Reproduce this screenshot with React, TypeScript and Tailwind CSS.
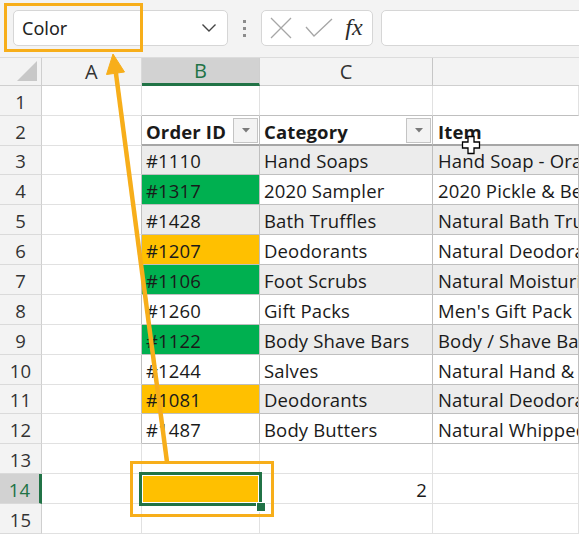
import React from "react";

type Row = {
  n: number;
  b?: string;
  c?: string;
  d?: string;
  bCls?: string;
  band?: boolean;
  h: string;
};

const rows: Row[] = [
  { n: 3, b: "#1110", c: "Hand Soaps", d: "Hand Soap - Orange", bCls: "bg-[#ececec]", band: true, h: "h-[29px]" },
  { n: 4, b: "#1317", c: "2020 Sampler", d: "2020 Pickle & Beer", bCls: "bg-[#00b050]", h: "h-[30px]" },
  { n: 5, b: "#1428", c: "Bath Truffles", d: "Natural Bath Truffles", bCls: "bg-[#ececec]", band: true, h: "h-[30px]" },
  { n: 6, b: "#1207", c: "Deodorants", d: "Natural Deodorant", bCls: "bg-[#ffc000]", h: "h-[30px]" },
  { n: 7, b: "#1106", c: "Foot Scrubs", d: "Natural Moisturizing Foot Scrub", bCls: "bg-[#00b050]", band: true, h: "h-[30px]" },
  { n: 8, b: "#1260", c: "Gift Packs", d: "Men's Gift Pack", bCls: "bg-white", h: "h-[30px]" },
  { n: 9, b: "#1122", c: "Body Shave Bars", d: "Body / Shave Bar", bCls: "bg-[#00b050]", band: true, h: "h-[30px]" },
  { n: 10, b: "#1244", c: "Salves", d: "Natural Hand & Body Salve", bCls: "bg-white", h: "h-[30px]" },
  { n: 11, b: "#1081", c: "Deodorants", d: "Natural Deodorant", bCls: "bg-[#ffc000]", band: true, h: "h-[29px]" },
  { n: 12, b: "#1487", c: "Body Butters", d: "Natural Whipped Body Butter", bCls: "bg-white", h: "h-[30px]" },
];

const base =
  "shrink-0 h-full box-border border-r border-b flex items-center overflow-hidden whitespace-nowrap pt-[2px]";

function RowHead({ n, active }: { n: number; active?: boolean }) {
  return (
    <div
      className={
        active
          ? "shrink-0 w-[42px] h-full box-border border-b border-b-[#dadada] border-r-[3px] border-r-[#217346] bg-[#d2d2d2] text-[#217346] flex items-center justify-center text-[18.5px] pt-[2px]"
          : "shrink-0 w-[42px] h-full box-border border-b border-b-[#dadada] border-r border-r-[#cfcfcf] bg-[#f3f3f3] text-[#333] flex items-center justify-center text-[18.5px] pt-[2px]"
      }
    >
      {n}
    </div>
  );
}

function FilterBtn() {
  return (
    <div className="shrink-0 w-[25px] h-[25px] mr-[1px] box-border border border-[#c4c4c4] bg-[#f3f3f3] flex items-center justify-center">
      <svg width="8" height="5" viewBox="0 0 8 5">
        <path d="M0 0 L8 0 L4 4.5 Z" fill="#7a7a7a" />
      </svg>
    </div>
  );
}

function Cursor() {
  return (
    <svg width="20" height="20" viewBox="0 0 20 20">
      <path
        d="M7 1.5 H13 V7 H18.5 V13 H13 V18.5 H7 V13 H1.5 V7 H7 Z"
        fill="white"
        stroke="black"
        strokeWidth="1.3"
      />
    </svg>
  );
}

export default function App() {
  return (
    <div className="relative w-[579px] h-[534px] overflow-hidden bg-white font-['Open_Sans',sans-serif] text-[#1a1a1a] tracking-[0.15px]">
      {/* Toolbar */}
      <div className="h-[57px] bg-[#f3f3f3] flex items-start pt-[10px] pl-[13px]">
        <div className="w-[215px] h-[36px] box-border rounded-[5px] border border-[#d6d6d6] bg-white flex items-center pl-[8px] pr-[8px]">
          <span className="flex-1 text-[18px] text-[#222] font-['Noto_Sans',sans-serif] tracking-normal">Color</span>
          <svg width="16" height="10" viewBox="0 0 16 10" className="mr-[2px]">
            <path d="M1.5 1.5 L8 8 L14.5 1.5" fill="none" stroke="#444" strokeWidth="1.4" />
          </svg>
        </div>
        <div className="w-[33px] h-[36px] flex flex-col items-center justify-center gap-[4px]">
          <div className="w-[3px] h-[3px] bg-[#8c8c8c]" />
          <div className="w-[3px] h-[3px] bg-[#8c8c8c]" />
          <div className="w-[3px] h-[3px] bg-[#8c8c8c]" />
        </div>
        <div className="w-[112px] h-[36px] box-border rounded-[5px] border border-[#d6d6d6] bg-white flex items-center">
          <div className="w-[38px] flex justify-center">
            <svg width="22" height="22" viewBox="0 0 22 22">
              <path d="M1 1 L21 21 M21 1 L1 21" stroke="#a6a6a6" strokeWidth="1.3" />
            </svg>
          </div>
          <div className="w-[38px] flex justify-center">
            <svg width="28" height="20" viewBox="0 0 28 20">
              <path d="M1 9 L9 18 L27 1" fill="none" stroke="#a6a6a6" strokeWidth="1.3" />
            </svg>
          </div>
          <div className="w-[32px] flex justify-center text-[24px] italic text-[#2a2a2a] font-['Liberation_Serif',serif] leading-none pb-[2px] tracking-normal">
            fx
          </div>
        </div>
        <div className="flex-1 ml-[8px] -mr-[10px] h-[36px] box-border rounded-[5px] border border-[#d6d6d6] bg-white" />
      </div>

      {/* Column headers */}
      <div className="flex h-[29px] box-border border-t border-t-[#dcdcdc]">
        <div className="shrink-0 w-[42px] h-full box-border border-r border-b border-[#cfcfcf] bg-[#f3f3f3] flex items-end justify-end pr-[4px] pb-[4px]">
          <svg width="20" height="20" viewBox="0 0 20 20">
            <path d="M20 0 L20 20 L0 20 Z" fill="#c8c8c8" />
          </svg>
        </div>
        <div className="shrink-0 w-[100px] h-full box-border border-r border-b border-r-[#dadada] border-b-[#cfcfcf] bg-[#f3f3f3] flex items-center justify-center text-[20px] text-[#333]">
          A
        </div>
        <div className="shrink-0 w-[118px] h-full box-border border-r border-r-[#cfcfcf] border-b-[3px] border-b-[#217346] bg-[#d2d2d2] flex items-center justify-center text-[20px] text-[#217346]">
          B
        </div>
        <div className="shrink-0 w-[173px] h-full box-border border-r border-b border-r-[#c6c6c6] border-b-[#cfcfcf] bg-[#f3f3f3] flex items-center justify-center text-[20px] text-[#333]">
          C
        </div>
        <div className="flex-1 h-full box-border border-b border-b-[#cfcfcf] bg-[#f3f3f3]" />
      </div>

      {/* Row 1 */}
      <div className="flex h-[30px] text-[18.5px]">
        <RowHead n={1} />
        <div className={`${base} w-[100px] border-[#e1e1e1]`} />
        <div className={`${base} w-[118px] border-r-[#e1e1e1] border-b-[#bfbfbf]`} />
        <div className={`${base} w-[173px] border-r-[#e1e1e1] border-b-[#bfbfbf]`} />
        <div className={`${base} flex-1 border-r-[#e1e1e1] border-b-[#bfbfbf]`} />
      </div>

      {/* Row 2: table header */}
      <div className="flex h-[30px] text-[18.5px]">
        <RowHead n={2} />
        <div className={`${base} w-[100px] border-r-[#bfbfbf] border-b-[#e1e1e1]`} />
        <div className="shrink-0 w-[118px] h-full box-border border-r border-r-[#bfbfbf] border-b-2 border-b-[#a6a6a6] bg-white flex items-center justify-between pl-[4px] font-bold whitespace-nowrap overflow-hidden">
          <span className="pt-[3px]">Order ID</span>
          <FilterBtn />
        </div>
        <div className="shrink-0 w-[173px] h-full box-border border-r border-r-[#bfbfbf] border-b-2 border-b-[#a6a6a6] bg-white flex items-center justify-between pl-[4px] font-bold whitespace-nowrap overflow-hidden">
          <span className="pt-[3px]">Category</span>
          <FilterBtn />
        </div>
        <div className="flex-1 h-full box-border border-b-2 border-b-[#a6a6a6] bg-white flex items-center pl-[5px] pt-[3px] font-bold whitespace-nowrap overflow-hidden">
          Item
        </div>
      </div>

      {/* Rows 3-12 */}
      {rows.map((r) => (
        <div key={r.n} className={`flex ${r.h} text-[18.5px]`}>
          <RowHead n={r.n} />
          <div className={`${base} w-[100px] border-r-[#bfbfbf] border-b-[#e1e1e1]`} />
          <div className={`${base} w-[118px] border-[#bfbfbf] pl-[4px] ${r.bCls}`}>{r.b}</div>
          <div
            className={`${base} w-[173px] border-[#bfbfbf] pl-[4px] ${r.band ? "bg-[#ececec]" : "bg-white"}`}
          >
            {r.c}
          </div>
          <div
            className={`${base} flex-1 border-[#bfbfbf] pl-[5px] ${r.band ? "bg-[#ececec]" : "bg-white"}`}
          >
            {r.d}
          </div>
        </div>
      ))}

      {/* Row 13 */}
      <div className="flex h-[30px] text-[18.5px]">
        <RowHead n={13} />
        <div className={`${base} w-[100px] border-[#e1e1e1]`} />
        <div className={`${base} w-[118px] border-[#e1e1e1]`} />
        <div className={`${base} w-[173px] border-[#e1e1e1]`} />
        <div className={`${base} flex-1 border-[#e1e1e1]`} />
      </div>

      {/* Row 14 */}
      <div className="flex h-[30px] text-[18.5px]">
        <RowHead n={14} active />
        <div className={`${base} w-[100px] border-[#e1e1e1]`} />
        <div className={`${base} w-[118px] border-[#e1e1e1] bg-[#ffc000]`} />
        <div className={`${base} w-[173px] border-[#e1e1e1] justify-end pr-[5px]`}>2</div>
        <div className={`${base} flex-1 border-[#e1e1e1]`} />
      </div>

      {/* Row 15 */}
      <div className="flex h-[30px] text-[18.5px]">
        <RowHead n={15} />
        <div className={`${base} w-[100px] border-[#e1e1e1]`} />
        <div className={`${base} w-[118px] border-[#e1e1e1]`} />
        <div className={`${base} w-[173px] border-[#e1e1e1]`} />
        <div className={`${base} flex-1 border-[#e1e1e1]`} />
      </div>

      {/* Selection on B14 */}
      <div className="absolute left-[139px] top-[472px] w-[123px] h-[34px] box-border border-[3px] border-[#217346] shadow-[inset_0_0_0_1px_white]" />
      <div className="absolute left-[256px] top-[502px] w-[8px] h-[8px] bg-[#217346] border border-white box-content" />

      {/* Orange callout boxes */}
      <div className="absolute left-[4px] top-[3px] w-[139px] h-[49px] box-border border-[3px] border-[#f7ae1a]" />
      <div className="absolute left-[130px] top-[461px] w-[144px] h-[56px] box-border border-[3px] border-[#f7ae1a]" />

      {/* Arrow */}
      <svg className="absolute inset-0 pointer-events-none" width="579" height="534" viewBox="0 0 579 534">
        <line x1="115.5" y1="70" x2="167" y2="462" stroke="#f7ae1a" strokeWidth="4.5" />
        <path d="M113 54 L124.5 72 L106.5 74.5 Z" fill="#f7ae1a" stroke="#f7ae1a" strokeWidth="1" strokeLinejoin="round" />
      </svg>

      {/* Mouse cursor */}
      <div className="absolute left-[461px] top-[135px]">
        <Cursor />
      </div>
    </div>
  );
}
